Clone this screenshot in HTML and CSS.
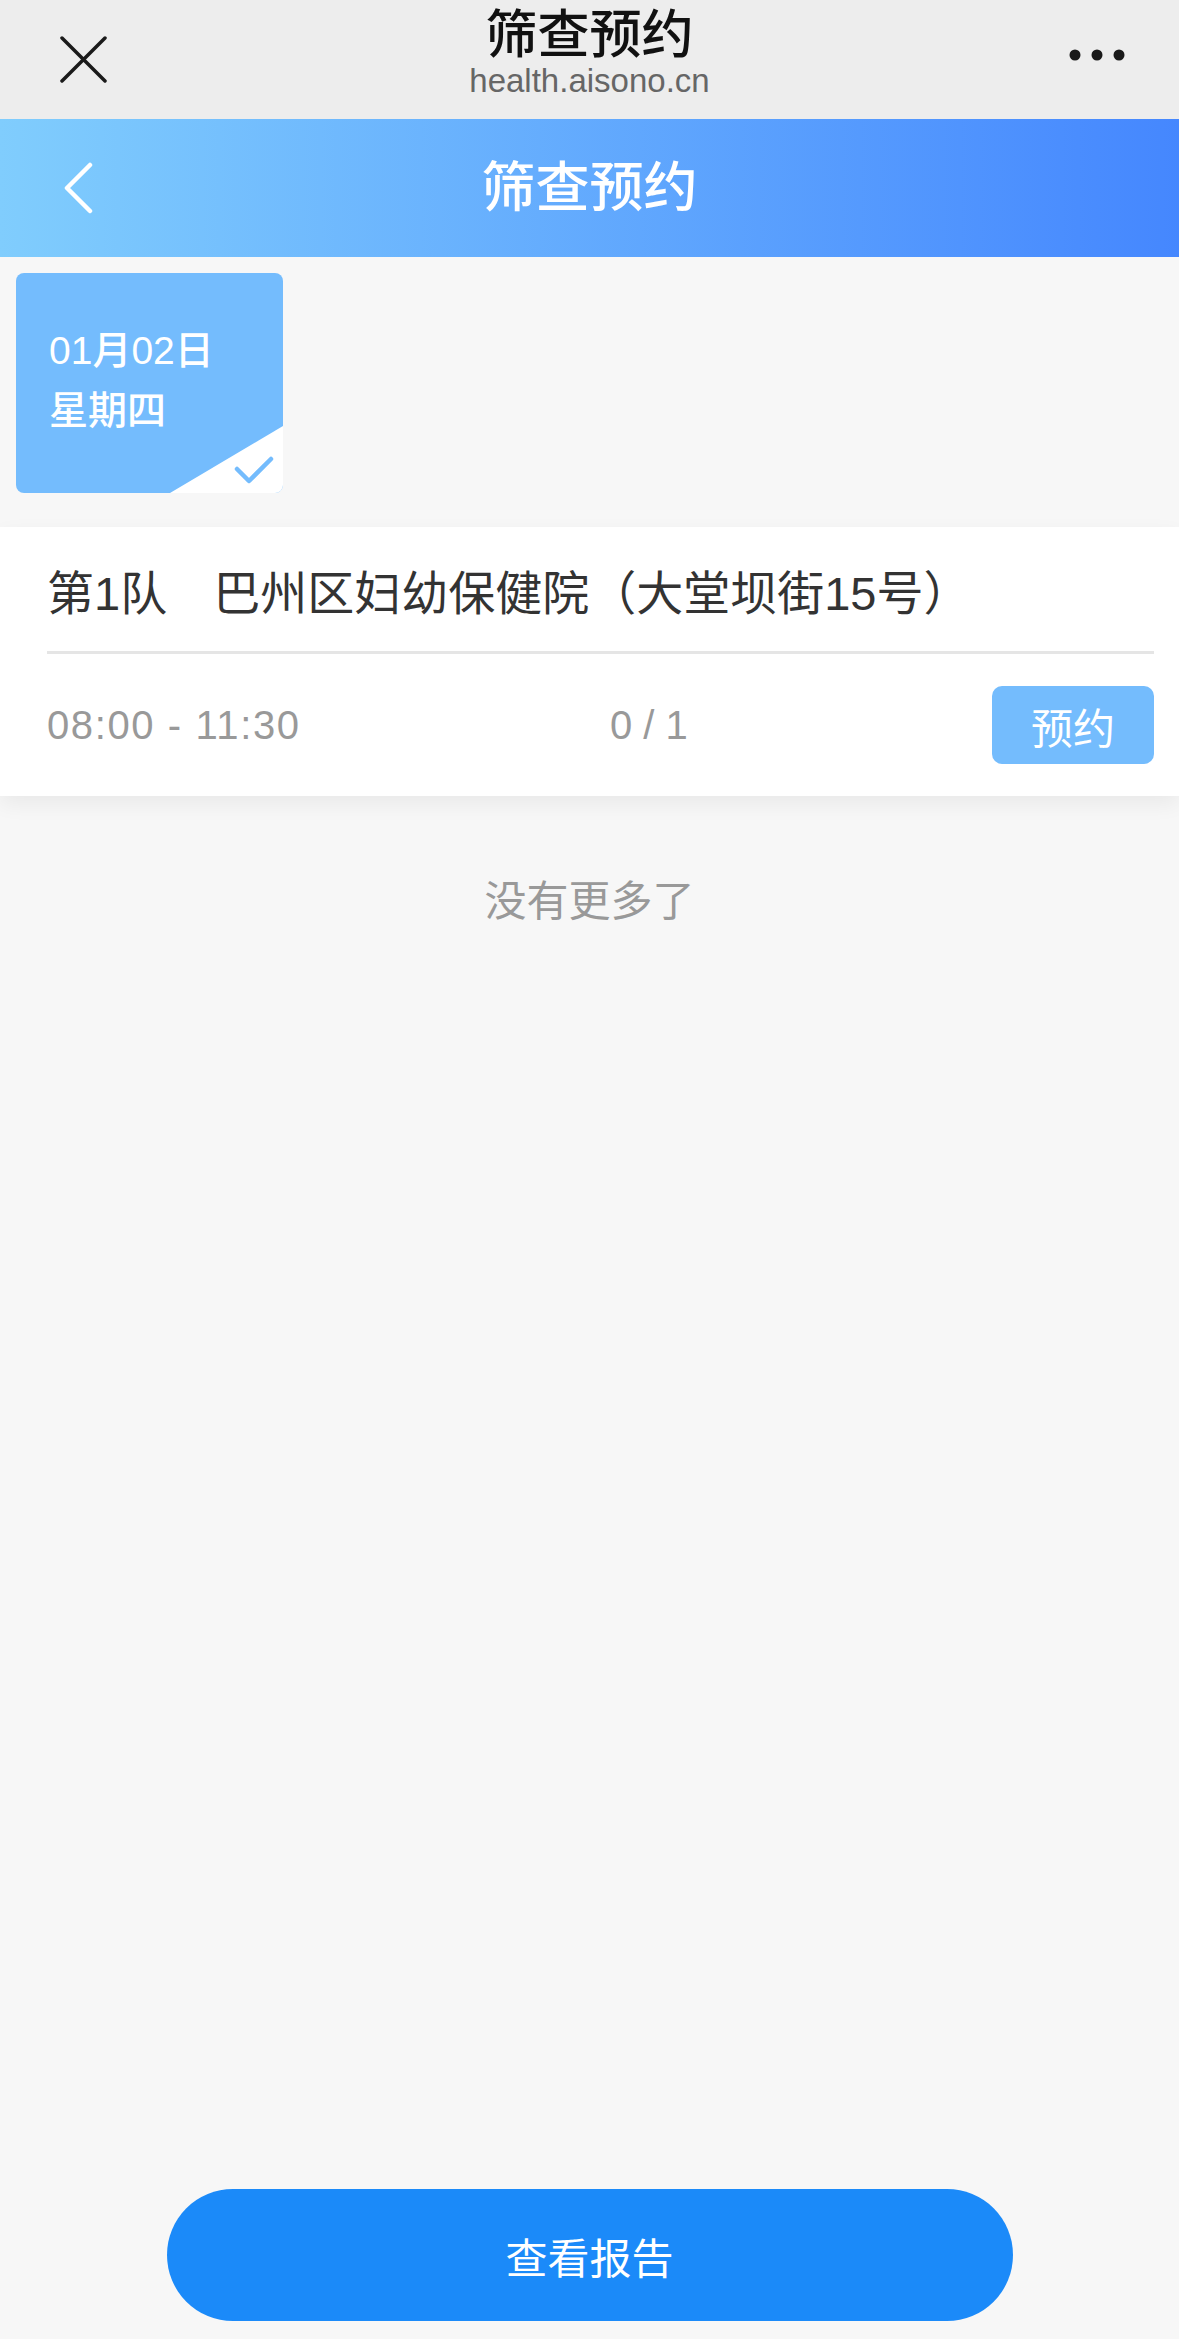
FILE: index.html
```html
<!DOCTYPE html>
<html lang="zh-CN">
<head>
    <meta charset="UTF-8">
    <meta name="viewport" content="width=device-width, initial-scale=1.0">
    <title>筛查预约</title>
    <link rel="stylesheet" href="styles.css">
</head>
<body>
    <div class="page">
        <!-- 微信顶部栏 -->
        <div class="top-bar">
            <div class="close-btn">
                <svg width="47" height="47" viewBox="0 0 47 47">
                    <path d="M2 2 L45 45 M45 2 L2 45" stroke="#1a1a1a" stroke-width="3.5" stroke-linecap="round" fill="none"/>
                </svg>
            </div>
            <div class="top-title">
                <div class="top-name">筛查预约</div>
                <div class="top-url">health.aisono.cn</div>
            </div>
            <div class="more-btn">
                <svg width="56" height="12" viewBox="0 0 56 12">
                    <circle cx="6" cy="6" r="5.5" fill="#1a1a1a"/>
                    <circle cx="28" cy="6" r="5.5" fill="#1a1a1a"/>
                    <circle cx="50" cy="6" r="5.5" fill="#1a1a1a"/>
                </svg>
            </div>
        </div>

        <!-- 页面标题 -->
        <div class="header">
            <div class="back-btn">
                <svg width="32" height="52" viewBox="0 0 32 52">
                    <path d="M27 3 L4 26 L27 49" stroke="#ffffff" stroke-width="4.5" stroke-linecap="round" stroke-linejoin="round" fill="none"/>
                </svg>
            </div>
            <h1>筛查预约</h1>
            <div></div>
        </div>

        <!-- 日期选择 -->
        <div class="date-list">
            <div class="date-item active">
                <div class="date-day">01月02日</div>
                <div class="date-week">星期四</div>
                <svg class="date-check" width="113" height="67" viewBox="0 0 113 67">
                    <polygon points="0,67 113,0 113,67" fill="#ffffff"/>
                    <polyline points="67,43 79,55 101,33" stroke="#74bcfd" stroke-width="4.5" stroke-linecap="round" stroke-linejoin="round" fill="none"/>
                </svg>
            </div>
        </div>

        <!-- 筛查队列表 -->
        <div class="team-list">
            <div class="team-item">
                <div class="team-title">
                    <span>第1队</span>
                    <span class="team-place">巴州区妇幼保健院（大堂坝街15号）</span>
                </div>
                <div class="team-row">
                    <span class="team-time">08:00 - 11:30</span>
                    <span class="team-count">0 / 1</span>
                    <button class="book-btn">预约</button>
                </div>
            </div>
        </div>

        <div class="no-more">没有更多了</div>

        <div class="bottom-bar">
            <button class="report-btn">查看报告</button>
        </div>
    </div>
</body>
</html>
```

FILE: styles.css
```css
body {
    margin: 0;
    padding: 0;
    background-color: #f7f7f7;
    font-family: "Liberation Sans", "Noto Sans CJK SC", sans-serif;
}
.page {
    display: flex;
    flex-direction: column;
    min-height: 100vh;
}
.top-bar {
    height: 119px;
    background-color: #ededed;
    display: grid;
    grid-template-columns: 1fr auto 1fr;
    align-items: center;
}
.close-btn {
    justify-self: start;
    margin-left: 60px;
    height: 47px;
}
.more-btn {
    justify-self: end;
    margin-right: 54px;
    height: 12px;
    margin-top: -14px;
}
.top-title {
    align-self: start;
    padding-top: 10px;
    text-align: center;
}
.top-name {
    font-size: 52px;
    line-height: 50px;
    font-weight: 500;
    color: #111;
}
.top-url {
    margin-top: 4px;
    font-size: 33px;
    line-height: 34px;
    color: #666;
}
.header {
    height: 138px;
    background: linear-gradient(to right, #80cdfd, #4587fe);
    display: grid;
    grid-template-columns: 1fr auto 1fr;
    align-items: center;
}
.back-btn {
    justify-self: start;
    margin-left: 63px;
    height: 52px;
}
.header h1 {
    margin: 0;
    font-size: 54px;
    font-weight: 500;
    color: #fff;
    line-height: 60px;
}
.date-list {
    display: flex;
    padding: 16px 16px 34px;
}
.date-item {
    position: relative;
    overflow: hidden;
    width: 267px;
    height: 220px;
    box-sizing: border-box;
    padding: 48px 0 0 33px;
    border-radius: 8px;
    background-color: #74bcfd;
    color: #fff;
    font-size: 39px;
    font-weight: 500;
    line-height: 60px;
}
.date-check {
    position: absolute;
    right: 0;
    bottom: 0;
}
.team-list {
    background-color: #fff;
    box-shadow: 0 8px 20px rgba(0, 0, 0, 0.06);
}
.team-item {
    padding: 0 25px 0 47px;
}
.team-title {
    height: 124px;
    display: flex;
    align-items: center;
    font-size: 47px;
    color: #333;
    border-bottom: 3px solid #e5e5e5;
}
.team-place {
    margin-left: 46px;
}
.team-row {
    height: 142px;
    display: flex;
    align-items: center;
    font-size: 40px;
    color: #999;
}
.team-time {
    width: 563px;
    letter-spacing: 1.6px;
}
.team-count {
    flex: 1;
}
.book-btn {
    width: 162px;
    height: 78px;
    border: none;
    border-radius: 10px;
    background-color: #74bcfd;
    color: #fff;
    font-family: inherit;
    font-size: 42px;
    padding: 0;
}
.no-more {
    margin-top: 76px;
    text-align: center;
    font-size: 42px;
    line-height: 60px;
    color: #999;
}
.bottom-bar {
    margin-top: auto;
    padding-bottom: 18px;
    display: flex;
    justify-content: center;
}
.report-btn {
    width: 846px;
    height: 132px;
    border: none;
    border-radius: 66px;
    background-color: #1b8af9;
    color: #fff;
    font-family: inherit;
    font-size: 42px;
    padding: 0;
}
```
